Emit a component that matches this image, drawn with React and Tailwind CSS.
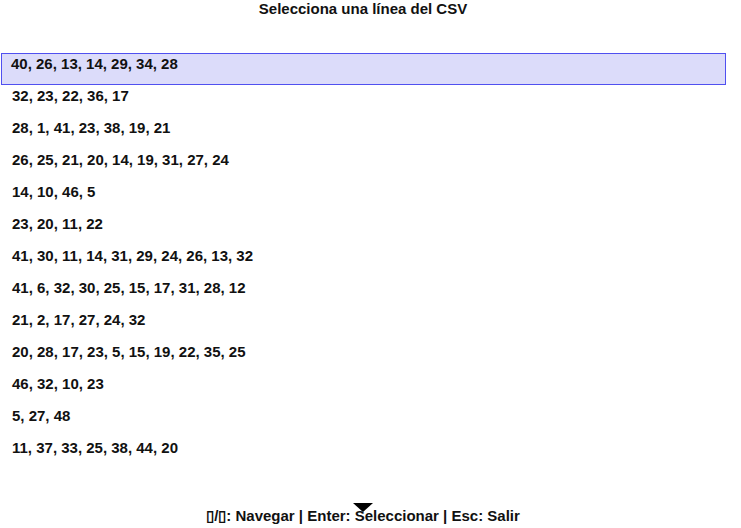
import { useState } from "react";

const lines = [
  "40, 26, 13, 14, 29, 34, 28",
  "32, 23, 22, 36, 17",
  "28, 1, 41, 23, 38, 19, 21",
  "26, 25, 21, 20, 14, 19, 31, 27, 24",
  "14, 10, 46, 5",
  "23, 20, 11, 22",
  "41, 30, 11, 14, 31, 29, 24, 26, 13, 32",
  "41, 6, 32, 30, 25, 15, 17, 31, 28, 12",
  "21, 2, 17, 27, 24, 32",
  "20, 28, 17, 23, 5, 15, 19, 22, 35, 25",
  "46, 32, 10, 23",
  "5, 27, 48",
  "11, 37, 33, 25, 38, 44, 20",
];

export default function App() {
  const [selected, setSelected] = useState(0);

  return (
    <div className="relative w-[741px] h-[528px] bg-white text-[#111] font-['Liberation_Sans',Arial,sans-serif] font-bold">
      <div className="w-[726px]">
        {/* Title */}
        <h1 className="h-[18px] text-center text-[15px] leading-[18px]">
          Selecciona una línea del CSV
        </h1>

        {/* List */}
        <ul className="mt-[35px] pl-[1px]">
          {lines.map((line, i) => (
            <li
              key={i}
              onClick={() => setSelected(i)}
              className={
                i === selected
                  ? "h-[32px] pl-[9px] pt-[1px] text-[15px] leading-[18px] bg-[#dcdcfa] border border-[#5050f0]"
                  : "h-[32px] pl-[10px] pt-[1px] text-[15px] leading-[18px] border border-transparent"
              }
            >
              {line}
            </li>
          ))}
        </ul>

        {/* Footer */}
        <div className="mt-[38px] text-center text-[15px] leading-[18px]">
          ▯/▯: Navegar | Enter: Seleccionar | Esc: Salir
        </div>
      </div>

      {/* cursor marker overlapping the footer */}
      <svg
        className="absolute left-[353px] top-[503px]"
        width="20"
        height="10"
        viewBox="0 0 20 10"
      >
        <polygon points="0,0 20,0 10,9" fill="#000" />
      </svg>
    </div>
  );
}
